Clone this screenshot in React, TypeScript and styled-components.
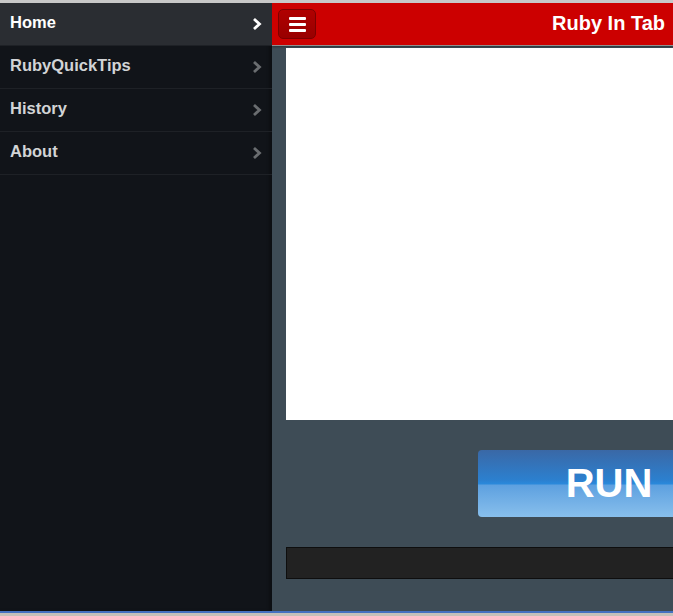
import styled, { createGlobalStyle } from 'styled-components'

const GlobalStyle = createGlobalStyle`
	html, body {
		margin: 0;
		padding: 0;
		background: #c4c0ba;
	}
	body {
		font-family: 'Liberation Sans', Arial, sans-serif;
	}
`

const Frame = styled.div`
	width: 673px;
	height: 616px;
	display: flex;
	flex-direction: column;
	overflow: hidden;
	background: #c4c0ba;
`

const TopEdge = styled.div`
	height: 3px;
	background: #c8c8c8;
	flex-shrink: 0;
`

const Screen = styled.div`
	flex: 1;
	display: flex;
	min-height: 0;
	border-bottom: 2px solid #4470c0;
	margin-bottom: 3px;
`

const Panel = styled.nav`
	width: 272px;
	flex-shrink: 0;
	background: #111419;
	box-shadow: inset -3px 0 3px rgba(0, 0, 0, 0.25);
	display: flex;
	flex-direction: column;
`

const MenuItem = styled.div<{ $active?: boolean }>`
	height: 42px;
	box-sizing: border-box;
	display: flex;
	align-items: center;
	justify-content: space-between;
	padding: 0 9px 3px 10px;
	border-bottom: 1px solid #1e2126;
	background: ${p => (p.$active ? '#2a2d32' : 'transparent')};
	color: ${p => (p.$active ? '#ffffff' : '#d2d4d6')};
	font-size: 16.5px;
	font-weight: bold;
	& + & {
		height: 43px;
	}
	&:first-child {
		height: 43px;
	}
`

const Chevron = styled.svg<{ $active?: boolean }>`
	width: 12px;
	height: 14px;
	margin-top: 3px;
	color: ${p => (p.$active ? '#ffffff' : '#6a6d70')};
`

const Main = styled.div`
	flex: 1;
	min-width: 0;
	display: flex;
	flex-direction: column;
	background: #3e4c56;
	overflow: hidden;
`

const Header = styled.header`
	height: 42px;
	flex-shrink: 0;
	background: #cc0000;
	display: flex;
	align-items: center;
	justify-content: space-between;
	padding: 0 8px 0 6px;
	border-bottom: 1px solid #8f8f8f;
	box-shadow: 0 1px 2px rgba(0, 0, 0, 0.35);
`

const MenuButton = styled.div`
	width: 38px;
	height: 30px;
	box-sizing: border-box;
	border: 1px solid #7c0000;
	border-radius: 5px;
	background: linear-gradient(#b00000, #980000);
	display: flex;
	flex-direction: column;
	align-items: center;
	justify-content: center;
	gap: 3px;
`

const Bar = styled.span`
	width: 17px;
	height: 3px;
	background: #ffffff;
	border-radius: 1px;
`

const Title = styled.h1`
	margin: 0 0 2px;
	color: #ffffff;
	font-size: 20px;
	font-weight: bold;
`

const Body = styled.div`
	flex: 1;
	padding: 2px 0 0 14px;
	display: flex;
	flex-direction: column;
`

const Editor = styled.div`
	height: 372px;
	background: #ffffff;
`

const RunRow = styled.div`
	margin-top: 30px;
	padding-left: 192px;
	display: flex;
`

const RunButton = styled.div`
	width: 262px;
	height: 67px;
	flex-shrink: 0;
	border-radius: 4px;
	background: linear-gradient(#3a68a6 0%, #2c80cf 45%, #2a88da 50%, #5ea1e0 53%, #88bfec 100%);
	color: #ffffff;
	font-size: 40px;
	font-weight: bold;
	display: flex;
	align-items: center;
	justify-content: center;
`

const Output = styled.div`
	margin-top: 30px;
	height: 32px;
	box-sizing: border-box;
	background: #222222;
	border: 1px solid #0e0e0e;
	border-right: none;
`

const items = ['Home', 'RubyQuickTips', 'History', 'About']

const ChevronIcon = ({ active }: { active?: boolean }) => (
	<Chevron $active={active} viewBox="0 0 12 14">
		<path d="M3 2 L8.5 7 L3 12" fill="none" stroke="currentColor" strokeWidth="2.8" />
	</Chevron>
)

export default function App() {
	return (
		<>
			<GlobalStyle />
			<Frame>
				<TopEdge />
				<Screen>
					<Panel>
						{items.map((item, i) => (
							<MenuItem key={item} $active={i === 0}>
								<span>{item}</span>
								<ChevronIcon active={i === 0} />
							</MenuItem>
						))}
					</Panel>
					<Main>
						<Header>
							<MenuButton>
								<Bar />
								<Bar />
								<Bar />
							</MenuButton>
							<Title>Ruby In Tab</Title>
						</Header>
						<Body>
							<Editor />
							<RunRow>
								<RunButton>RUN</RunButton>
							</RunRow>
							<Output />
						</Body>
					</Main>
				</Screen>
			</Frame>
		</>
	)
}
